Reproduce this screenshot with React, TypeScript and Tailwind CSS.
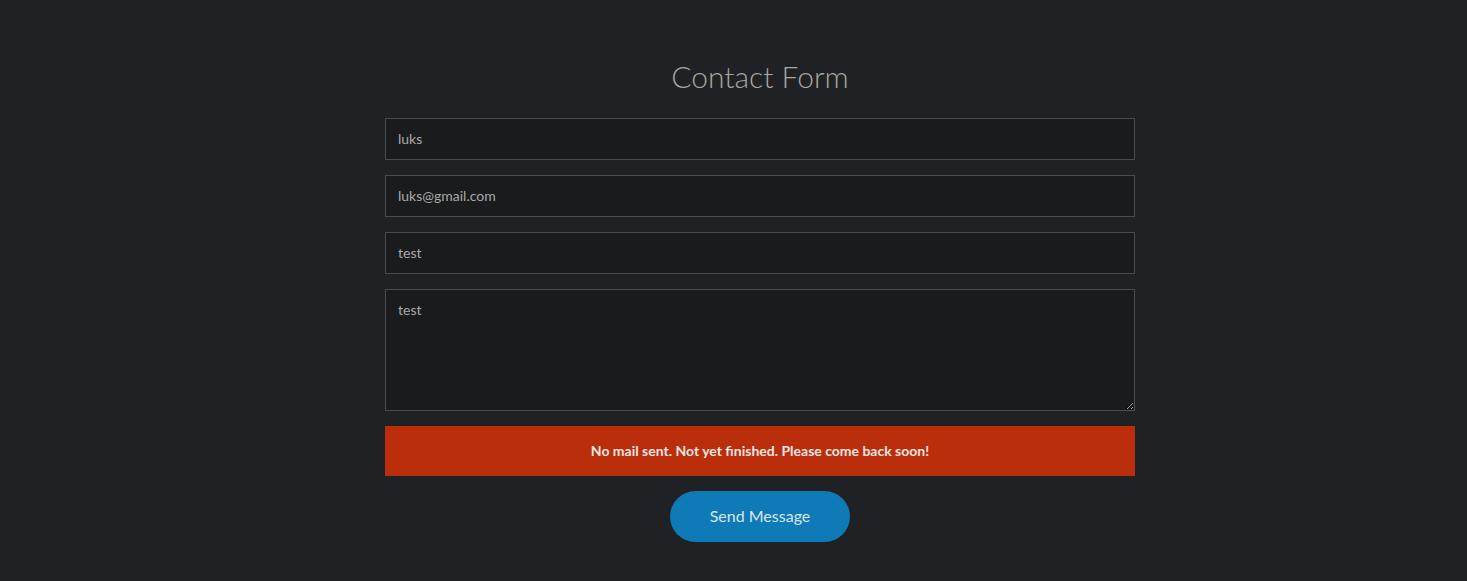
export default function App() {
  return (
    <div className="flex min-h-[581px] justify-center bg-[#202124] pl-[53px] font-['Lato',sans-serif]">
      <section className="w-[750px] pt-[56px]">
        <h1 className="text-center text-[30px] font-light leading-[40px] text-[#a7a6a1]">Contact Form</h1>

        <form className="mt-[22px] flex flex-col gap-[15px]" onSubmit={(e) => e.preventDefault()}>
          <input
            defaultValue="luks"
            className="h-[42px] w-full border border-[#4a4b4e] bg-[#1a1b1d] px-3 pb-[2px] text-[14px] text-[#a9a9a9] outline-none"
          />
          <input
            defaultValue="luks@gmail.com"
            className="h-[42px] w-full border border-[#4a4b4e] bg-[#1a1b1d] px-3 pb-[2px] text-[14px] text-[#a9a9a9] outline-none"
          />
          <input
            defaultValue="test"
            className="h-[42px] w-full border border-[#4a4b4e] bg-[#1a1b1d] px-3 pb-[2px] text-[14px] text-[#a9a9a9] outline-none"
          />
          <textarea
            defaultValue="test"
            className="block h-[122px] w-full border border-[#4a4b4e] bg-[#1a1b1d] px-3 py-[9px] text-[14px] text-[#a9a9a9] outline-none"
          />

          {/* status message */}
          <div className="flex h-[50px] items-center justify-center bg-[#bb2e0b] pb-[2px] text-[14px] font-bold text-[#ece6e3]">
            No mail sent. Not yet finished. Please come back soon!
          </div>

          <div className="flex justify-center">
            <button
              type="submit"
              className="h-[51px] w-[180px] rounded-full bg-[#0e7ab7] pb-[2px] text-[16px] text-[#dbe6ee]"
            >
              Send Message
            </button>
          </div>
        </form>
      </section>
    </div>
  )
}
